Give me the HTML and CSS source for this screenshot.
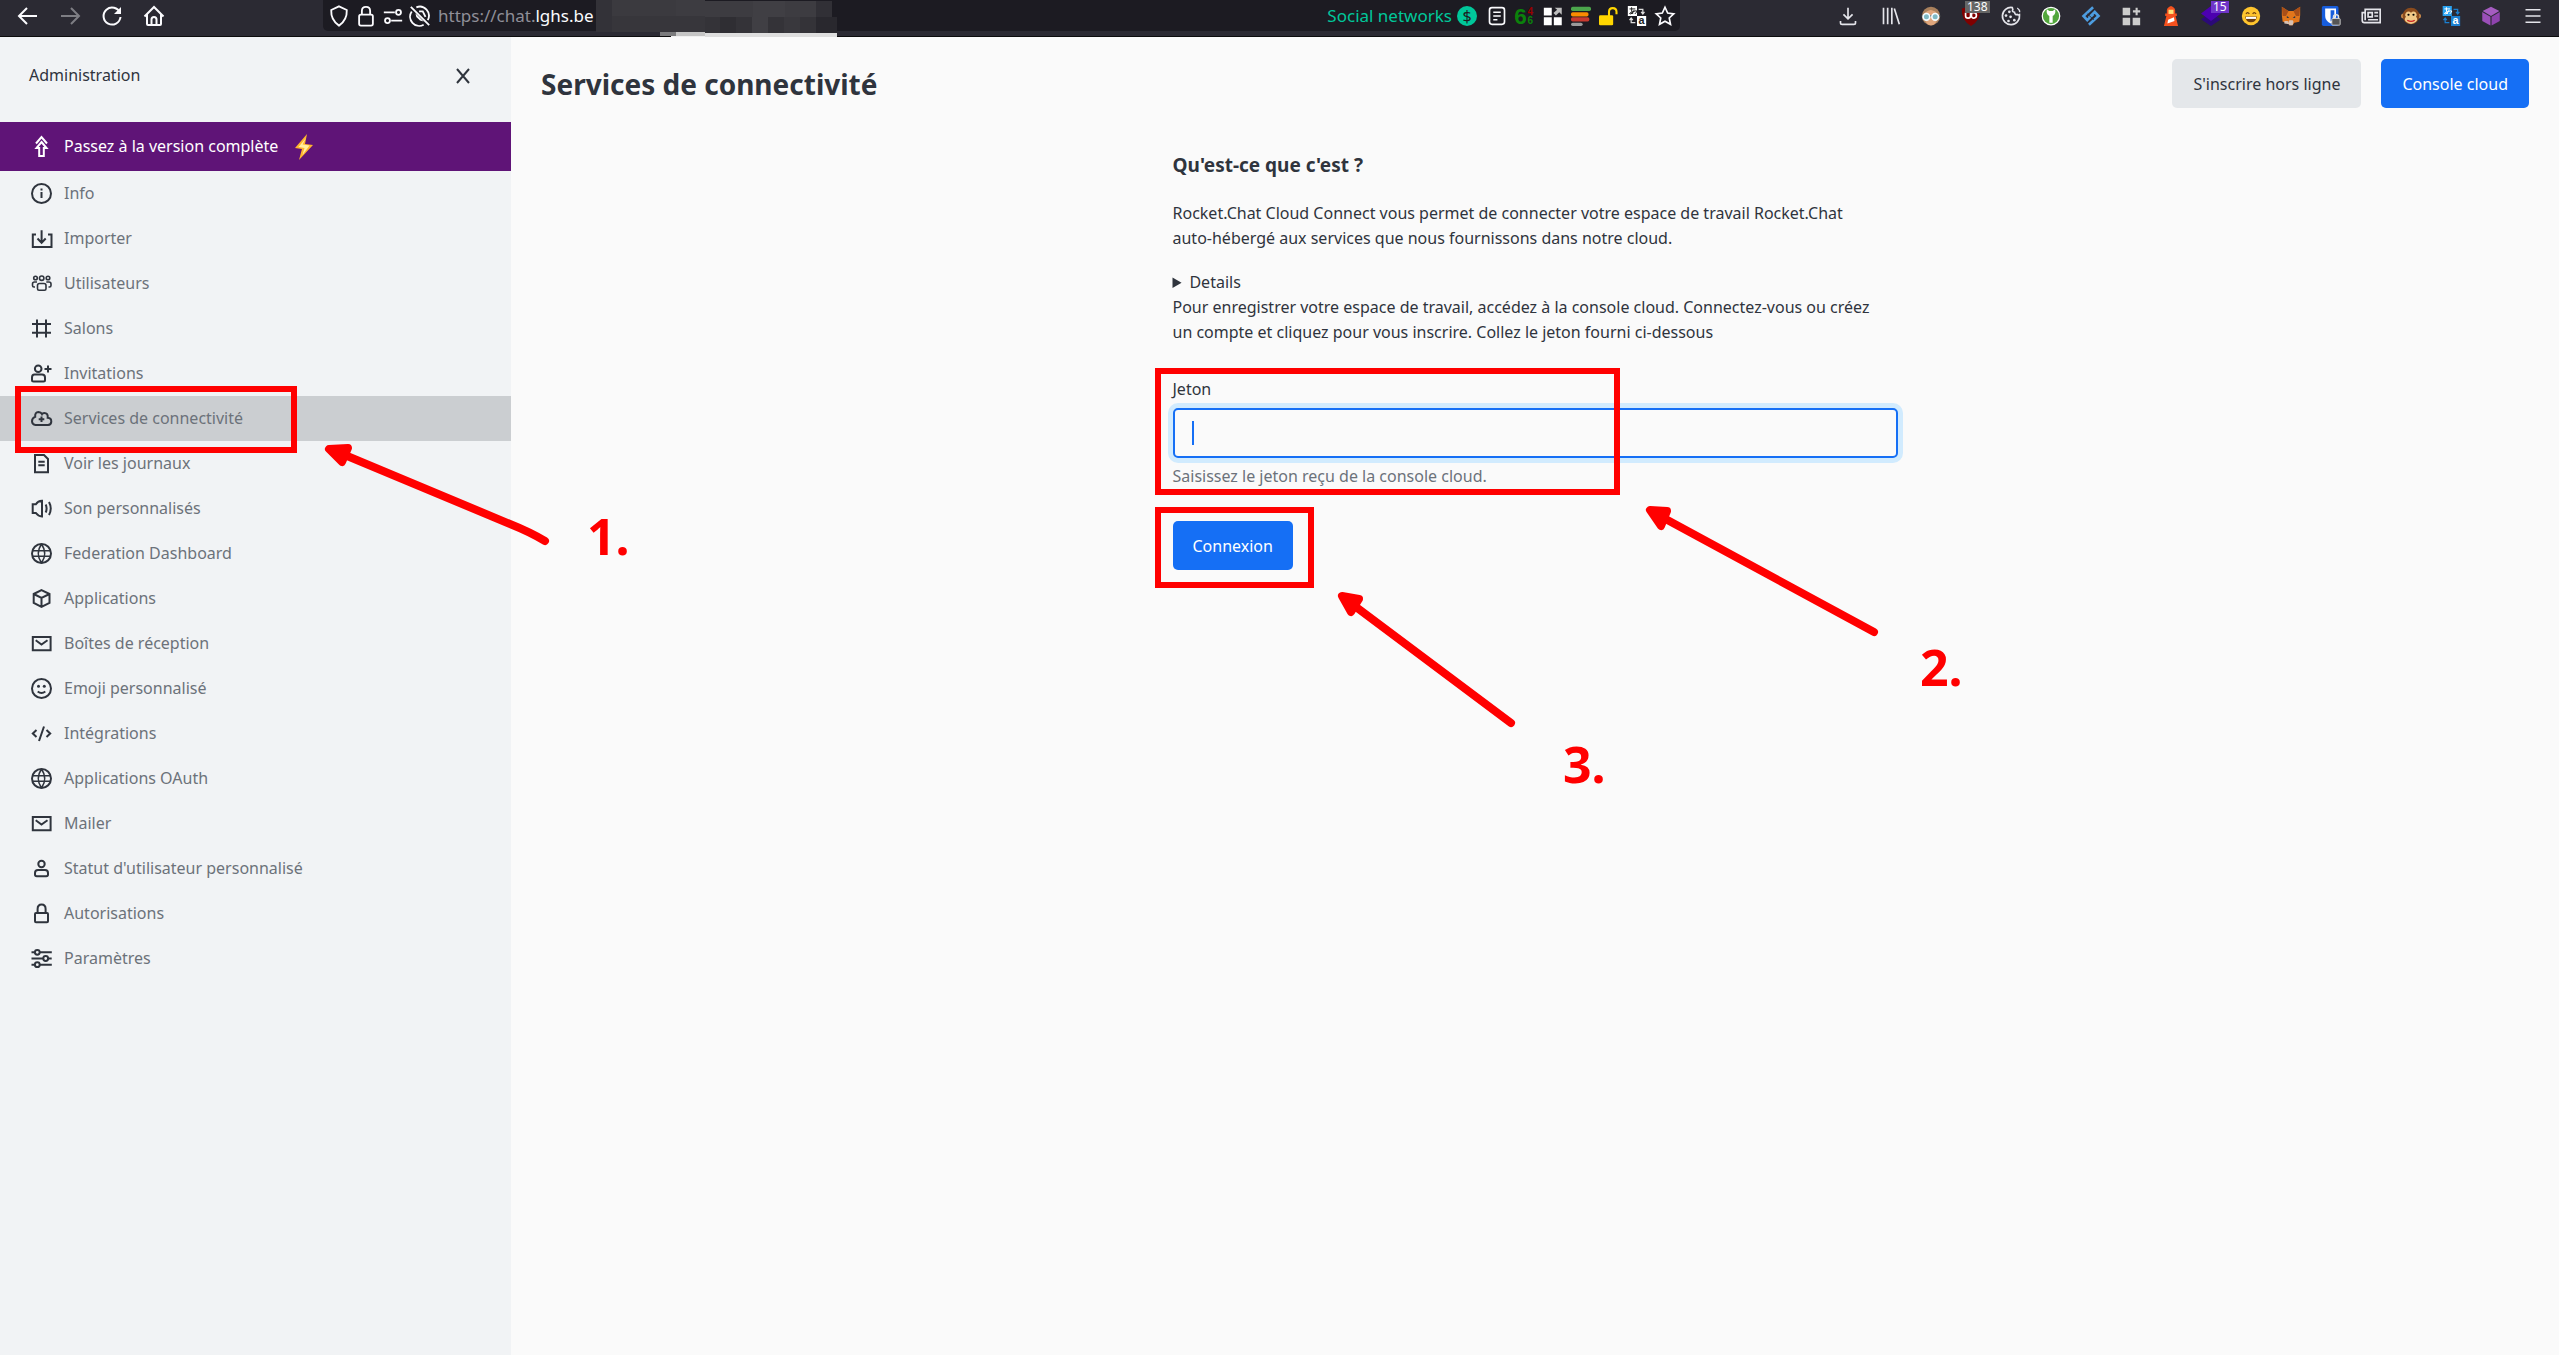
FILE: index.html
```html
<!DOCTYPE html>
<html lang="fr">
<head>
<meta charset="utf-8">
<title>Services de connectivité</title>
<link rel="stylesheet" href="styles.css">
</head>
<body>
<svg class="defs" aria-hidden="true">
  <symbol id="i-info" viewBox="0 0 25 25"><circle cx="12.5" cy="12.5" r="9.5"/><path d="M12.5 11v6M12.5 7.5v2"/></symbol>
  <symbol id="i-import" viewBox="0 0 25 25"><path d="M7 8.5H3.8V21h18.7V8.500H19M12.600 4.300V16.500M8.500 12.500l4.100 4.200 4.100-4.200"/></symbol>
  <symbol id="i-team" viewBox="0 0 25 25"><g stroke-width="1.600"><circle cx="6.500" cy="7" r="1.800"/><circle cx="12.700" cy="7.200" r="2.200"/><circle cx="19" cy="7" r="1.800"/><path d="M10.500 12.500h4.500q2 0 2 2v3.200q0 1.500-1.500 1.500h-5.500q-1.500 0-1.500-1.500v-3.200q0-2 2-2zM8 11H5.500Q3.500 11 3.500 13v1.500q0 1.500 1.500 1.500h1M17.300 11H20q2 0 2 2v1.500q0 1.500-1.500 1.500h-1"/></g></symbol>
  <symbol id="i-hash" viewBox="0 0 25 25"><path d="M8 3.500v18M17 3.500v18M3 8h19M3 16.700h19"/></symbol>
  <symbol id="i-invite" viewBox="0 0 25 25"><circle cx="9.200" cy="7.700" r="3.300"/><path d="M5.500 13.500h7.500q3 0 3 3v2.500q0 1.500-1.500 1.500h-10q-1.500 0-1.500-1.500v-2.500q0-3 2.500-3zM19 4.500v7M15.500 8h7"/></symbol>
  <symbol id="i-cloud" viewBox="0 0 25 25"><path d="M6.500 19h12.500q3.300-.3 3.300-3.600 0-3.400-3.600-3.600Q19.200 7 15.200 7q-1.700 0-2.200 1Q12 5.900 9.500 5.900q-3.700.3-3.300 5Q3 12 3 15.300 3.200 18.700 6.500 19zM12.500 10.500v5.600M9.700 13.300h5.600"/></symbol>
  <symbol id="i-doc" viewBox="0 0 25 25"><path d="M6 4h9l4 4v13.200H6zM9.300 10.700h6.400M9.300 14.200h6.400"/></symbol>
  <symbol id="i-sound" viewBox="0 0 25 25"><path d="M3.700 8.300h3.200Q9 5 13 4.800v15.600Q9 20 6.900 17H3.700zM16.700 8.500q1.800 4 0 8M20 6q3.500 6.500 0 13"/></symbol>
  <symbol id="i-globe" viewBox="0 0 25 25"><circle cx="12.500" cy="12.500" r="9.500"/><g stroke-width="1.600"><path d="M12.500 3q-6.500 9.500 0 19M12.500 3q6.500 9.500 0 19M4 9.800h17M4 15.300h17"/></g></symbol>
  <symbol id="i-cube" viewBox="0 0 25 25"><path d="M12.500 4.200L20.500 8v9l-8 4-7.800-4V8zM4.700 8l7.800 4 8-4M12.500 12v9"/></symbol>
  <symbol id="i-mail" viewBox="0 0 25 25"><path d="M3.800 6h17.800v13.200H3.800zM6.700 9.300l5.800 4.200 6-4.200"/></symbol>
  <symbol id="i-smile" viewBox="0 0 25 25"><circle cx="12.500" cy="12.500" r="9.500"/><path d="M8.700 15.500q3.800 3 7.600 0"/><g class="solid"><circle cx="9.500" cy="10.300" r="1.500"/><circle cx="15.300" cy="10.300" r="1.500"/></g></symbol>
  <symbol id="i-code" viewBox="0 0 25 25"><path d="M7.500 9l-3.700 3.500 3.700 3.500M17.500 9l3.700 3.500-3.700 3.500M15 5.500l-5 14.500"/></symbol>
  <symbol id="i-user" viewBox="0 0 25 25"><circle cx="12.500" cy="8" r="3.200"/><path d="M9 14h7q3 0 3 3v1.500q0 1.800-1.800 1.800H7.800q-1.800 0-1.800-1.800V17q0-3 3-3z"/></symbol>
  <symbol id="i-lock" viewBox="0 0 25 25"><rect x="6" y="12" width="13" height="9.200" rx="1"/><path d="M8.600 12V8q0-4.500 4-4.500t4 4.500v4"/></symbol>
  <symbol id="i-sliders" viewBox="0 0 25 25"><path d="M2.500 6.300h3.300M10.800 6.300h12M2.500 12.500h11.700M19.200 12.500h3.500M2.500 18.700h3.300M10.800 18.700h12"/><circle cx="8.300" cy="6.300" r="2.400"/><circle cx="16.700" cy="12.500" r="2.400"/><circle cx="8.300" cy="18.700" r="2.400"/></symbol>
  <symbol id="i-up" viewBox="0 0 25 25"><path d="M12.500 8l5 6h-2.700v8h-4.600v-8H7.500zM7 9.500l5.500-6.500 5.500 6.500"/></symbol>
</svg>

<header class="toolbar">
  <nav class="tb-nav" aria-label="Navigation">
    <button class="tb-btn" aria-label="Précédent"><svg viewBox="0 0 24 24"><path d="M21 12H3M11 4l-8 8 8 8"/></svg></button>
    <button class="tb-btn dim" aria-label="Suivant"><svg viewBox="0 0 24 24"><path d="M3 12h18M13 4l8 8-8 8"/></svg></button>
    <button class="tb-btn" aria-label="Actualiser"><svg viewBox="0 0 24 24"><path d="M20 9A8.500 8.500 0 1 0 20.500 13"/><path d="M21 3v7h-7z" class="fill"/></svg></button>
    <button class="tb-btn" aria-label="Accueil"><svg viewBox="0 0 24 24"><path d="M2.500 12.500L12 3l9.500 9.500M5 10.500V20q0 1 1 1h12q1 0 1-1v-9.500M9.500 21v-5.500q0-2.500 2.500-2.500t2.500 2.500V21"/></svg></button>
  </nav>
  <div class="urlbar">
    <div class="url-icons">
      <svg viewBox="0 0 24 24"><path d="M12 1.500l8.500 4q.5 11-8.500 17Q3 16.500 3.500 5.500z"/></svg>
      <svg viewBox="0 0 24 24"><rect x="4.500" y="10.500" width="15" height="12" rx="2"/><path d="M7.500 10.500V6.500q0-4.500 4.500-4.500t4.500 4.500v4"/></svg>
      <svg viewBox="0 0 24 24"><path d="M2 8h12M10 17h12"/><circle cx="18" cy="8" r="2.700"/><circle cx="6" cy="17" r="2.700"/></svg>
      <svg viewBox="0 0 24 24"><path d="M2 2l20 20M8 2.500a10 10 0 0 1 12.500 14M3 7a10 10 0 0 0 13 14.500M11 7h4l3 6"/><path d="M7 9l9 9-4-1-4-4z" class="fill"/></svg>
    </div>
    <span class="url">https://chat.<b>lghs.be</b></span>
    <svg class="mosaic" width="241" height="37" viewBox="0 0 241 37" shape-rendering="crispEdges" aria-hidden="true">
      <rect width="109" height="32" fill="#37363b"/><rect x="16" width="64" height="16" fill="#3b3a3f"/><rect x="80" width="29" height="16" fill="#3d3c41"/>
      <rect x="0" width="16" height="32" fill="#333238"/>
      <rect x="109" y="1" width="127" height="32" fill="#343338"/><rect x="109" y="1" width="111" height="16" fill="#3d3c41"/><rect x="157" y="1" width="32" height="16" fill="#403f44"/>
      <rect x="124" y="17" width="16" height="16" fill="#2f2e33"/><rect x="156" y="17" width="16" height="16" fill="#403f44"/><rect x="188" y="17" width="16" height="16" fill="#39383d"/><rect x="220" y="1" width="16" height="16" fill="#313036"/><rect x="220" y="17" width="21" height="16" fill="#29282e"/>
      <rect x="64" y="32" width="16" height="4" fill="#7b7b7d"/><rect x="80" y="32" width="29" height="4" fill="#c5c5c5"/><rect x="75" y="36" width="166" height="1" fill="#f0f0f0"/><rect x="109" y="33" width="132" height="4" fill="#dedede"/>
    </svg>
    <div class="url-tail">
      <span class="container-name">Social networks</span>
      <svg class="dollar" viewBox="0 0 20 20"><circle cx="10" cy="10" r="10" fill="#00c79a"/><text x="10" y="16">$</text></svg>
      <svg viewBox="0 0 24 24"><rect x="3" y="2" width="18" height="20" rx="3"/><path d="M7.500 7.500h9M7.500 12h9M7.500 16.500h5"/></svg>
      <svg class="six" viewBox="0 0 24 24"><text x="-1" y="22" class="six-big">6</text><text x="15" y="11" class="six-red">4</text><text x="15" y="21" class="six-small">6</text></svg>
      <svg class="flat" viewBox="0 0 24 24"><path fill="#fff" d="M1 2h9.500v9.500H1zM1 13.500h9.500V23H1zM13 13.500h9.500V23H13z"/><path fill="#bdbdbd" d="M14 2h8.500v8.500l-3-3-4 4-3-3 4.500-4z"/></svg>
      <svg class="flat" viewBox="0 0 24 24"><rect y="1" width="24" height="5" rx="2" fill="#4ba54c"/><rect y="7.500" width="21" height="5" rx="2" fill="#fb8c00"/><rect y="13.500" width="22" height="5" rx="2" fill="#c8392f"/><rect y="20" width="14" height="4" rx="2" fill="#9b9b9b"/></svg>
      <svg class="flat" viewBox="0 0 24 24"><rect x="0" y="11" width="17" height="12" rx="1.500" fill="#ffd600"/><path d="M12 12V7q0-4.500 4.500-4.500T21 7v3" fill="none" stroke="#ffd600" stroke-width="2.500"/></svg>
      <svg class="flat" viewBox="0 0 24 24"><rect x="1" y="0" width="11" height="12" fill="#fff"/><rect x="12" y="12" width="11" height="12" fill="#fff"/><path d="M3 3.500h7M5.500 1.500q-.5 5 1.500 8M8.500 5q-1.500 5-4.500 4.500T8 6.500t1.500 3" fill="none" stroke="#222" stroke-width="1.200"/><text x="17.500" y="22" class="tr-dark">a</text><path d="M14 4h5v5M17 7l2 2.500L21 7M10 20H5v-5M3 17l2-2.500L7 17" fill="none" stroke="#ddd" stroke-width="1.500"/></svg>
      <svg viewBox="0 0 24 24"><path d="M12 1.500l3.200 7 7.300.9-5.400 5 1.500 7.600L12 18.300 5.400 22l1.500-7.600-5.400-5 7.300-.9z"/></svg>
    </div>
  </div>
  <div class="extensions">
    <svg class="line download" viewBox="0 0 24 24"><path d="M12 2v13M6.500 10l5.500 5.500 5.500-5.500M3 18v2q0 2 2 2h14q2 0 2-2v-2"/></svg>
    <svg class="line" viewBox="0 0 24 24"><path d="M3 2v20M8 2v20M13 2v20M16 3l6 19"/></svg>
    <svg viewBox="0 0 24 24"><circle cx="12" cy="12" r="11" fill="#a9805c"/><path d="M4.500 8Q10 4 13 5q5 1 6.500 4v7q-2 7-7.500 7.500-5.500-.5-7.500-7.500z" fill="#e0a67c"/><path d="M1 12h22" stroke="#3c5b66" stroke-width="2"/><g fill="#7fb9c4" stroke="#f4fbff" stroke-width="2"><circle cx="6.500" cy="13" r="4"/><circle cx="17" cy="13" r="4"/></g></svg>
    <span class="badged"><svg viewBox="0 0 24 24"><path d="M12 0l11 3q1 14-11 21Q0 17 1 3z" fill="#800000"/><path d="M5.500 8v4q0 2.500 3 2.500t3-2.500V8M13 8h2.500q3 0 3 3.200t-3 3.300-3-3.300z" fill="none" stroke="#fff" stroke-width="2"/></svg><span class="badge gray">138</span></span>
    <svg class="line" viewBox="0 0 24 24"><path d="M13.500 1.800A10.300 10.300 0 1 0 22.200 10.500q-1 .7-2.500-.3-3 .8-3.500-2.700-3.500-.5-2-3.200z"/><path d="M19.500 2.500q3 2 3 5" stroke-width="1.500"/><g class="crumbs"><circle cx="10" cy="7" r="1.600"/><circle cx="6" cy="11.500" r="1.600"/><circle cx="11.500" cy="13" r="1.600"/><circle cx="9" cy="18" r="1.600"/><circle cx="16" cy="17" r="1.600"/></g></svg>
    <svg viewBox="0 0 24 24"><circle cx="12" cy="12" r="10.500" fill="#52a63c" stroke="#fff" stroke-width="1.500"/><path d="M7 4l3 2h4l3-2q1 6-3 8v8h-4v-8Q6 10 7 4z" fill="#fff"/></svg>
    <svg viewBox="0 0 24 24"><g fill="none" stroke="#4d9de0" stroke-width="3.200"><path d="M14.500 1.500L3 12l4.500 5 7-7M9.500 22.500L21 12l-4.500-5-7 7"/><path d="M7.500 9.500l8 7" stroke="#2b2a33" stroke-width="1"/></g></svg>
    <svg viewBox="0 0 24 24"><path d="M2 2h9v9H2zM2 14h9v9H2zM14 14h9v9h-9zM17.500 2h2.500v3.200h3v2.500h-3V11h-2.500V7.700h-3.200V5.200h3.200z" fill="#ccc"/></svg>
    <svg viewBox="0 0 24 24"><path d="M12 0q4.500 1.500 5 5v4h2v3h-1.500l3 12H3.500l3-12H5V9h2V5q.5-3.500 5-5z" fill="#f4511e"/><rect x="9" y="4.500" width="6" height="5" fill="#ffe37a"/><path d="M8.500 16.500l7-3 .7 4.500-8.500 3z" fill="#fff"/></svg>
    <span class="badged"><svg viewBox="0 0 24 24"><path d="M12 8l12 8-12 8-12-8z" fill="#2b0a78"/><path d="M12 0l12 9-12 9L0 9z" fill="#4c00b0"/></svg><span class="badge violet">15</span></span>
    <svg viewBox="0 0 24 24"><circle cx="12" cy="12" r="11" fill="#ffc52e"/><path d="M5 12.500h14q-1 7-7 7t-7-7z" fill="#6d3f10"/><path d="M6 13h12v2.500H6z" fill="#fff"/><path d="M6 9.500q1.800-3 4 0M14 9.500q1.800-3 4 0" fill="none" stroke="#6d3f10" stroke-width="1.500"/></svg>
    <svg viewBox="0 0 24 24"><path d="M1 1l8 5h6l8-5v10l-1 8-6 1-2 3h-4l-2-3-6-1-1-8z" fill="#e2761b"/><path d="M1 1l8 5-3 6H2zM23 1l-8 5 3 6h4z" fill="#a94f18"/><path d="M9 19l1-2h4l1 2-1 4h-4zM4 18h4l2 4-6-1z" fill="#d7c1b3"/><path d="M7 12l3 2-3 .5zM17 12l-3 2 3 .5z" fill="#233447"/></svg>
    <svg viewBox="0 0 24 24"><rect x="1" y="0" width="20" height="24" rx="2" fill="#175ddc"/><path d="M5 3h13v9q0 6-6.500 9Q5 18 5 12z" fill="#fff"/><path d="M11.500 5h4.500v7q0 4-4.500 6.500z" fill="#175ddc"/><rect x="13" y="15" width="10" height="8" rx="1" fill="#555" stroke="#ddd"/><path d="M15 15v-2q0-2.500 3-2.500t3 2.500v2" fill="none" stroke="#ddd" stroke-width="1.800"/></svg>
    <svg class="line" viewBox="0 0 24 24"><path d="M5 4h18v16H4q-2.500 0-2.500-2.500V8H5zM5 8v9M8.500 8h5v5h-5zM16 8h4.500M16 12h4.500M8.500 16.500h12"/></svg>
    <svg viewBox="0 0 24 24"><circle cx="3" cy="12" r="3" fill="#c98a4b"/><circle cx="21" cy="12" r="3" fill="#c98a4b"/><circle cx="12" cy="12" r="10" fill="#8a4b1d"/><path d="M12 8q3-3 6 0 2 3 0 5 3 3 0 6-6 5-12 0-3-3 0-6-2-2 0-5 3-3 6 0z" fill="#f0c987"/><circle cx="9" cy="10.500" r="1.300"/><circle cx="15" cy="10.500" r="1.300"/><path d="M7.500 17q4.500 3 9 0" fill="none" stroke="#c22" stroke-width="1.500"/></svg>
    <svg viewBox="0 0 24 24"><rect x="2" y="0" width="11" height="12" fill="#29a3f2"/><rect x="12" y="12" width="11" height="12" fill="#1b7fd0"/><path d="M4 3.500h7M6.500 1.500q-.5 5 1.500 8M9.500 5q-1.500 5-4.500 4.500T9 6.500t1.500 3" fill="none" stroke="#fff" stroke-width="1.200"/><text x="17.500" y="22" class="tr-light">a</text><path d="M15 4h5v5M18 7l2 2.500L22 7M10 20H5v-5M3 17l2-2.500L7 17" fill="none" stroke="#1b7fd0" stroke-width="1.500"/></svg>
    <svg viewBox="0 0 24 24"><path d="M12 1l10 5-10 6L2 6z" fill="#a55cc0"/><path d="M1.500 7.200L11.300 13v10.500L1.500 18z" fill="#9b4fb8"/><path d="M22.500 7.200L12.700 13v10.500l9.800-5.500z" fill="#8e43ad"/></svg>
    <svg class="line app-menu" viewBox="0 0 24 24"><path d="M3 4.500h18M3 12h18M3 19.500h18"/></svg>
  </div>
</header>

<div class="app">
  <aside class="sidebar">
    <div class="side-head">
      <h2>Administration</h2>
      <button class="close" aria-label="Fermer"><svg viewBox="0 0 16 16"><path d="M2 1l12 14M14 1L2 15"/></svg></button>
    </div>
    <nav class="menu">
      <a href="#" class="upgrade"><svg class="icon"><use href="#i-up"/></svg>Passez à la version complète<svg class="bolt" viewBox="0 0 18 26"><path d="M12 0L0 14l7 1-3 11L18 11l-8-1z" fill="#ffb62e"/><path d="M11 4L3.500 13l6 1-2 7 7-9.500-7-1z" fill="#fff0a0"/></svg></a>
      <a href="#"><svg class="icon"><use href="#i-info"/></svg>Info</a>
      <a href="#"><svg class="icon"><use href="#i-import"/></svg>Importer</a>
      <a href="#"><svg class="icon"><use href="#i-team"/></svg>Utilisateurs</a>
      <a href="#"><svg class="icon"><use href="#i-hash"/></svg>Salons</a>
      <a href="#"><svg class="icon"><use href="#i-invite"/></svg>Invitations</a>
      <a href="#" class="active" aria-current="page"><svg class="icon"><use href="#i-cloud"/></svg>Services de connectivité</a>
      <a href="#"><svg class="icon"><use href="#i-doc"/></svg>Voir les journaux</a>
      <a href="#"><svg class="icon"><use href="#i-sound"/></svg>Son personnalisés</a>
      <a href="#"><svg class="icon"><use href="#i-globe"/></svg>Federation Dashboard</a>
      <a href="#"><svg class="icon"><use href="#i-cube"/></svg>Applications</a>
      <a href="#"><svg class="icon"><use href="#i-mail"/></svg>Boîtes de réception</a>
      <a href="#"><svg class="icon"><use href="#i-smile"/></svg>Emoji personnalisé</a>
      <a href="#"><svg class="icon"><use href="#i-code"/></svg>Intégrations</a>
      <a href="#"><svg class="icon"><use href="#i-globe"/></svg>Applications OAuth</a>
      <a href="#"><svg class="icon"><use href="#i-mail"/></svg>Mailer</a>
      <a href="#"><svg class="icon"><use href="#i-user"/></svg>Statut d'utilisateur personnalisé</a>
      <a href="#"><svg class="icon"><use href="#i-lock"/></svg>Autorisations</a>
      <a href="#"><svg class="icon"><use href="#i-sliders"/></svg>Paramètres</a>
    </nav>
  </aside>

  <main class="main">
    <div class="page-head">
      <h1>Services de connectivité</h1>
      <div class="actions">
        <button class="btn">S'inscrire hors ligne</button>
        <button class="btn primary">Console cloud</button>
      </div>
    </div>
    <section class="content">
      <h3>Qu'est-ce que c'est ?</h3>
      <p class="intro">Rocket.Chat Cloud Connect vous permet de connecter votre espace de travail Rocket.Chat <span class="keep">auto-hébergé</span> aux services que nous fournissons dans notre cloud.</p>
      <details><summary>Details</summary></details>
      <p>Pour enregistrer votre espace de travail, accédez à la console cloud. Connectez-vous ou créez <span class="keep">un compte</span> et cliquez pour vous inscrire. Collez le jeton fourni ci-dessous</p>
      <form class="form">
        <label for="token">Jeton</label>
        <div class="field"><input id="token" type="text" aria-describedby="hint"><span class="caret"></span></div>
        <p class="hint" id="hint">Saisissez le jeton reçu de la console cloud.</p>
        <button type="button" class="btn primary">Connexion</button>
      </form>
    </section>
  </main>
</div>

<svg class="notes" aria-hidden="true">
  <g class="boxes">
    <rect x="18" y="389" width="276" height="61"/>
    <rect x="1158" y="371" width="459" height="121"/>
    <rect x="1158" y="510" width="153" height="75"/>
  </g>
  <g class="arrows">
    <path d="M545 541Q530 532 510 524L340 453"/>
    <path d="M1874 632L1660 516"/>
    <path d="M1511 723L1352 604"/>
  </g>
  <g class="heads">
    <path d="M329 449l19-1-6 14z"/>
    <path d="M1650 510l17 1-6 15z"/>
    <path d="M1342 596l17 3-8 13z"/>
  </g>
  <text x="587" y="555">1.</text>
  <text x="1920" y="686">2.</text>
  <text x="1563" y="783">3.</text>
</svg>
</body>
</html>
```
FILE: styles.css
```css
* { box-sizing: border-box; }

body {
  margin: 0;
  min-height: 100vh;
  display: flex;
  flex-direction: column;
  position: relative;
  font-family: "Noto Sans", "Open Sans", sans-serif;
  font-size: 16px;
  line-height: 25px;
  color: #2f343d;
  background: #fafafa;
}

h1, h2, h3, p { margin: 0; }
button, input { font: inherit; color: inherit; }
.defs { display: none; }

/* browser toolbar */
.toolbar {
  flex: none;
  height: 37px;
  display: flex;
  align-items: flex-start;
  background: #2b2a33;
  border-bottom: 1px solid #0c0c0d;
}
.toolbar svg { flex: none; }
.tb-nav {
  flex: none;
  width: 323px;
  height: 31px;
  padding-left: 16px;
  display: flex;
  align-items: center;
  gap: 18px;
}
.tb-btn {
  width: 24px;
  height: 24px;
  padding: 0;
  border: 0;
  background: none;
}
.tb-btn svg {
  display: block;
  width: 24px;
  height: 24px;
  fill: none;
  stroke: #fbfbfe;
  stroke-width: 2;
}
.tb-btn.dim { opacity: .4; }
.fill { fill: #fbfbfe; stroke: none; }

.urlbar {
  flex: 1;
  min-width: 0;
  height: 31px;
  display: flex;
  align-items: center;
  background: #1c1b22;
  border-radius: 0 0 5px 5px;
}
.url-icons { display: flex; gap: 5px; padding: 0 7px 0 5px; }
.url-icons svg, .url-tail svg {
  width: 22px;
  height: 22px;
  fill: none;
  stroke: #fbfbfe;
  stroke-width: 2;
}
.url { flex: none; width: 158px; font-size: 17px; color: #8f8f98; white-space: nowrap; }
.url b { font-weight: 400; color: #fbfbfe; }
.mosaic { align-self: flex-start; }
.url-tail {
  margin-left: auto;
  display: flex;
  align-items: center;
  gap: 8px;
  padding-right: 5px;
}
.url-tail svg { width: 20px; height: 20px; overflow: visible; }
.url-tail .flat { stroke: none; }
.container-name { color: #00c79a; font-size: 17px; margin-right: -3px; }
.url-tail .dollar { stroke: none; margin-right: 2px; }
.dollar text { font: 16px "Noto Sans", sans-serif; fill: #1c1b22; text-anchor: middle; }
.url-tail .six { stroke: none; }
.six-big { font: bold 27px "Liberation Sans", sans-serif; fill: #0b820b; }
.six-red { font: bold 12px "Liberation Sans", sans-serif; fill: #900; }
.six-small { font: bold 12px "Liberation Sans", sans-serif; fill: #0b820b; }
.tr-dark, .tr-light { font: bold 13px "Liberation Sans", sans-serif; fill: #222; text-anchor: middle; }
.tr-light { fill: #fff; }

.extensions {
  flex: none;
  width: 879px;
  height: 31px;
  padding-right: 16px;
  display: flex;
  align-items: center;
  justify-content: flex-end;
  gap: 20px;
}
.extensions svg { display: block; width: 20px; height: 20px; }
.extensions .line { fill: none; stroke: #e4e4ea; stroke-width: 2; }
.extensions .download { margin-right: 3px; }
.extensions .app-menu { margin-left: 2px; }
.crumbs { fill: #e4e4ea; stroke: none; }
.badged { position: relative; }
.badge {
  position: absolute;
  left: 10px;
  top: -5px;
  padding: 0 2px;
  font-size: 12px;
  line-height: 12px;
  color: #fff;
}
.gray { background: #666; left: 4px; }
.violet { background: #6f35c9; }

/* administration layout */
.app { flex: 1; display: flex; }

.sidebar { flex: none; width: 511px; background: #f1f3f5; }
.side-head {
  height: 85px;
  padding: 0 39px 8px 29px;
  display: flex;
  align-items: center;
  justify-content: space-between;
}
.side-head h2 { font-size: 16px; font-weight: 400; }
.close { width: 18px; height: 18px; padding: 1px; border: 0; background: none; }
.close svg { display: block; width: 16px; height: 16px; fill: none; stroke: #2f343d; stroke-width: 2; }

.menu a {
  height: 45px;
  padding: 0 29px;
  display: flex;
  align-items: center;
  gap: 10px;
  color: #6c727a;
  text-decoration: none;
}
.menu .upgrade { height: 49px; background: #5f1477; color: #fff; }
.menu .active { background: #cbced1; }
.icon {
  width: 25px;
  height: 25px;
  fill: none;
  stroke: #2f343d;
  stroke-width: 2;
}
.solid { fill: #2f343d; stroke: none; }
.upgrade .icon { stroke: #fff; }
.bolt { width: 18px; height: 26px; margin-left: 7px; }

.main { flex: 1; min-width: 0; }
.page-head {
  padding: 21px 30px 0;
  display: flex;
  align-items: center;
  justify-content: space-between;
}
.page-head h1 { font-size: 28px; line-height: 49px; font-weight: 700; padding-top: 2px; }
.actions { display: flex; gap: 20px; }
.btn {
  height: 49px;
  padding: 2px 20px 0;
  border: 0;
  border-radius: 5px;
  background: #e4e7ea;
}
.actions .btn { padding: 2px 21px 0; }
.btn.primary { background: #156ff5; color: #fff; }

.content { max-width: 725px; margin: 44px auto 0; }
.content h3 { font-size: 19px; line-height: 25px; font-weight: 700; }
.keep { white-space: nowrap; }
.intro { margin: 23px 0 19px; }
summary { line-height: 25px; }
.form { display: flex; flex-direction: column; align-items: flex-start; margin-top: 32px; }
.form label { margin-bottom: 6px; }
.field { position: relative; width: 100%; }
.field input {
  display: block;
  width: 100%;
  height: 50px;
  padding: 0 17px;
  border: 2px solid #156ff5;
  border-radius: 5px;
  background: #fafafa;
  outline: none;
  box-shadow: 0 0 0 5px #d1ebfe;
}
.caret { position: absolute; left: 19px; top: 13px; width: 2px; height: 24px; background: #156ff5; }
.hint { margin: 6px 0 32px; color: #6c727a; }

/* red tutorial marks drawn over the page */
.notes {
  position: absolute;
  left: 0;
  top: 0;
  width: 100%;
  height: 100%;
  pointer-events: none;
}
.boxes { fill: none; stroke: #f00; stroke-width: 6; }
.arrows { fill: none; stroke: #f00; stroke-width: 8; stroke-linecap: round; }
.heads { fill: #f00; stroke: #f00; stroke-width: 8; stroke-linejoin: round; }
.notes text { font-size: 50px; font-weight: 700; fill: #f00; }
```
